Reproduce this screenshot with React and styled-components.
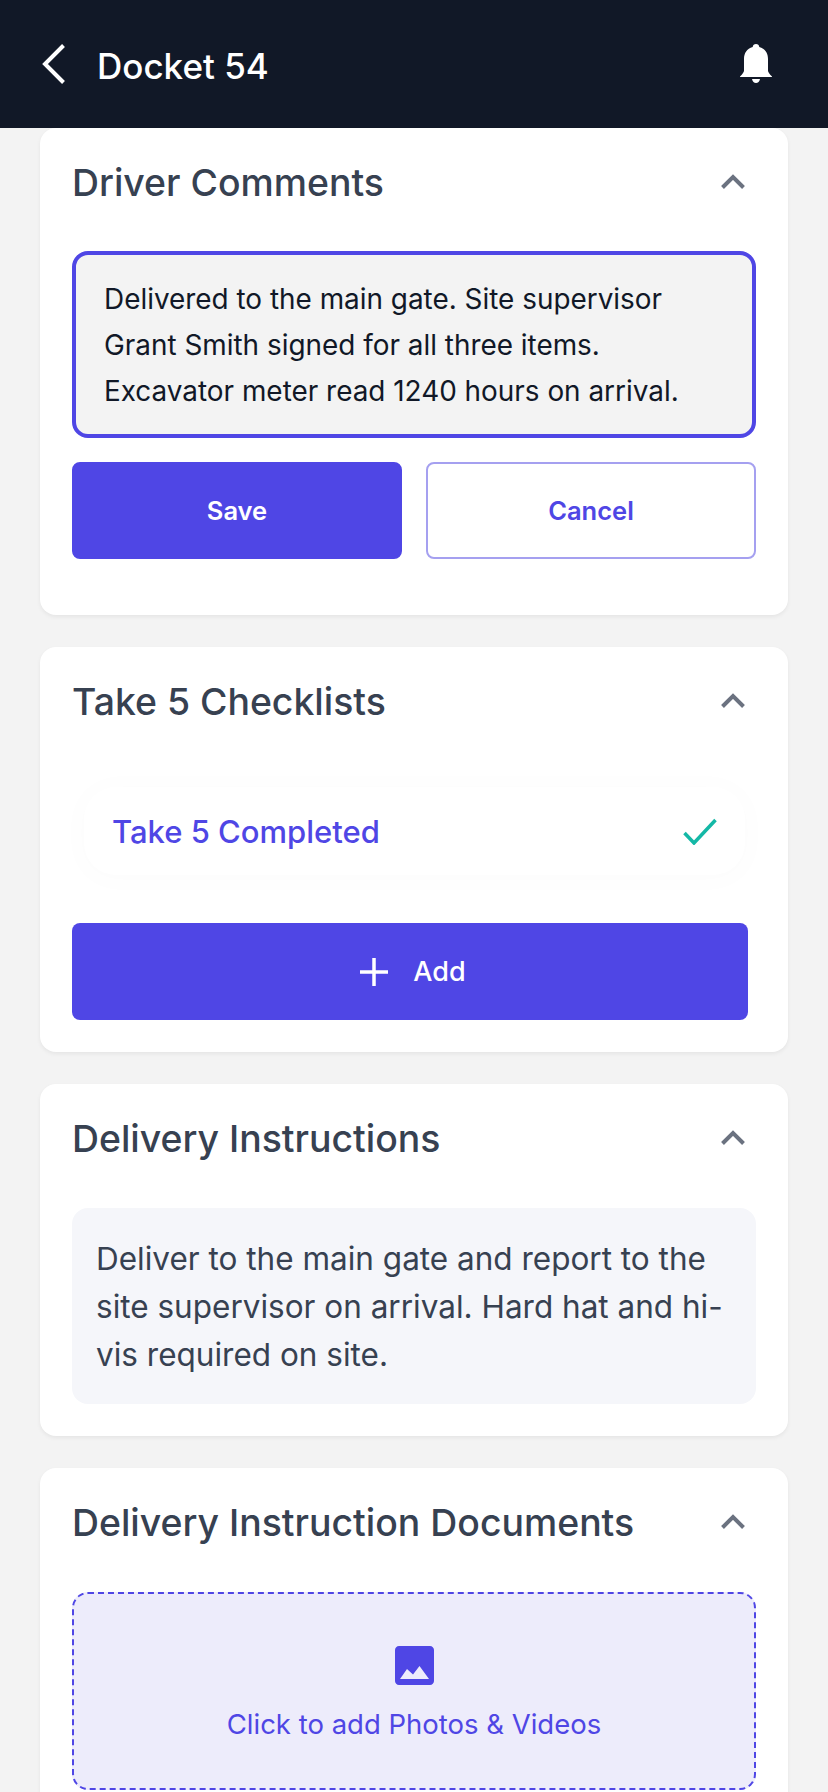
import React from 'react';
import styled, { createGlobalStyle } from 'styled-components';

const GlobalStyle = createGlobalStyle`
  html, body {
    margin: 0;
    padding: 0;
    background: #F3F3F3;
  }
  * {
    box-sizing: border-box;
  }
`;

const Page = styled.div`
  width: 828px;
  height: 1792px;
  overflow: hidden;
  background: #F3F3F3;
  font-family: Inter, 'Liberation Sans', sans-serif;
`;

const Header = styled.header`
  height: 128px;
  background: #111827;
  display: flex;
  align-items: center;
  justify-content: space-between;
  padding: 0 56px 0 42px;
`;

const HeaderLeft = styled.div`
  display: flex;
  align-items: center;
  gap: 32px;
`;

const Title = styled.h1`
  margin: 4px 0 0;
  color: #FFFFFF;
  font-size: 35px;
  font-weight: 500;
  line-height: 44px;
`;

const Content = styled.main`
  display: flex;
  flex-direction: column;
  gap: 32px;
  padding: 0 40px;
`;

const Card = styled.section`
  background: #FFFFFF;
  border-radius: 16px;
  box-shadow: 0 2px 4px rgba(0, 0, 0, 0.06);
  padding: 0 32px 32px;
`;

const CardHead = styled.div`
  height: 123px;
  display: flex;
  align-items: flex-start;
  justify-content: space-between;
  padding: 27px 11px 0 0;
`;

const CardTitle = styled.h2`
  margin: 0;
  color: #374151;
  font-size: 37.4px;
  font-weight: 450;
  line-height: 56px;
`;

const Chevron = styled.svg`
  margin-top: 19px;
  width: 24px;
  height: 15px;
`;

const Comment = styled.div`
  height: 187px;
  border: 4px solid #4F46E5;
  border-radius: 16px;
  background: #F3F3F3;
  padding: 21px 28px;
  color: #111827;
  font-size: 27.9px;
  line-height: 46px;
`;

const Actions = styled.div`
  display: flex;
  gap: 24px;
  margin: 24px 0;
`;

const ActionButton = styled.button`
  flex: 1;
  height: 97px;
  border-radius: 8px;
  border: 2px solid ${(p) => (p.$outline ? '#A5A0F0' : '#4F46E5')};
  background: ${(p) => (p.$outline ? '#FFFFFF' : '#4F46E5')};
  color: ${(p) => (p.$outline ? '#4F46E5' : '#FFFFFF')};
  font-family: inherit;
  font-size: 25.5px;
  font-weight: 600;
`;

const ChecklistRow = styled.div`
  height: 88px;
  margin: 17px 11px 48px 12px;
  padding: 0 28px;
  display: flex;
  align-items: center;
  justify-content: space-between;
  border-radius: 32px;
  background: #FFFFFF;
  box-shadow: 0 2px 24px 8px rgba(0, 0, 0, 0.012);
  color: #4F46E5;
  font-size: 31px;
  font-weight: 450;
`;

const AddButton = styled.button`
  width: 676px;
  height: 97px;
  display: flex;
  align-items: center;
  justify-content: center;
  gap: 25px;
  padding: 0 0 0 6px;
  border: none;
  border-radius: 8px;
  background: #4F46E5;
  color: #FFFFFF;
  font-family: inherit;
  font-size: 27px;
  font-weight: 500;
`;

const Instructions = styled.p`
  margin: 1px 0 0;
  height: 196px;
  padding: 27px 24px;
  border-radius: 16px;
  background: #F5F6FA;
  color: #374151;
  font-size: 31.5px;
  line-height: 48px;
  font-weight: 400;
`;

const DropZone = styled.div`
  margin-top: 1px;
  height: 198px;
  display: flex;
  flex-direction: column;
  align-items: center;
  padding-top: 52px;
  gap: 19px;
  border: 2px dashed #4F46E5;
  border-radius: 16px;
  background: #EDECFB;
  color: #4F46E5;
  font-size: 27.5px;
  line-height: 40px;
`;

const ChevronUp = () => (
  <Chevron viewBox="0 0 24 15" fill="none" stroke="#6B7280" strokeWidth="4">
    <path d="M1.5 13.5 12 3l10.5 10.5" />
  </Chevron>
);

const Section = ({ title, children }) => (
  <Card>
    <CardHead>
      <CardTitle>{title}</CardTitle>
      <ChevronUp />
    </CardHead>
    {children}
  </Card>
);

export default function App() {
  return (
    <Page>
      <GlobalStyle />
      <Header>
        <HeaderLeft>
          <svg width="23" height="40" viewBox="0 0 23 40" fill="none" stroke="#FFFFFF" strokeWidth="4">
            <path d="M21.5 1.5 3 20l18.5 18.5" />
          </svg>
          <Title>Docket 54</Title>
        </HeaderLeft>
        <svg width="32" height="40" viewBox="0 0 32 40" fill="#FFFFFF">
          <path d="M16 0c1.800 0 3.200 1.300 3.300 3.100C25.200 4.500 28 9.500 28 15v11.500c0 1.500 1.300 3.300 4 6V33H0v-.5c2.700-2.700 4-4.500 4-6V15C4 9.500 6.800 4.500 12.700 3.100 12.800 1.300 14.200 0 16 0z" />
          <path d="M12 35h8c-.5 2.500-2 4-4 4s-3.500-1.500-4-4z" />
        </svg>
      </Header>
      <Content>
        <Section title="Driver Comments">
          <Comment>
            Delivered to the main gate. Site supervisor
            <br />
            Grant Smith signed for all three items.
            <br />
            Excavator meter read 1240 hours on arrival.
          </Comment>
          <Actions>
            <ActionButton>Save</ActionButton>
            <ActionButton $outline>Cancel</ActionButton>
          </Actions>
        </Section>
        <Section title="Take 5 Checklists">
          <ChecklistRow>
            Take 5 Completed
            <svg width="34" height="27" viewBox="0 0 34 27" fill="none" stroke="#14B8A6" strokeWidth="3.500">
              <path d="M1.500 15 11 25 32.500 2" />
            </svg>
          </ChecklistRow>
          <AddButton>
            <svg width="28" height="28" viewBox="0 0 28 28" fill="none" stroke="#FFFFFF" strokeWidth="3.500">
              <path d="M14 0v28M0 14h28" />
            </svg>
            Add
          </AddButton>
        </Section>
        <Section title="Delivery Instructions">
          <Instructions>
            Deliver to the main gate and report to the site supervisor on arrival. Hard hat and hi-vis required on site.
          </Instructions>
        </Section>
        <Section title="Delivery Instruction Documents">
          <DropZone>
            <svg width="39" height="39" viewBox="0 0 39 39" fill="#4F46E5">
              <path
                fillRule="evenodd"
                d="M4 0h31c2.200 0 4 1.800 4 4v31c0 2.200-1.800 4-4 4H4c-2.200 0-4-1.800-4-4V4c0-2.200 1.800-4 4-4zM5 33h29L24.500 20 18 28.500 12 23z"
              />
            </svg>
            Click to add Photos &amp; Videos
          </DropZone>
        </Section>
      </Content>
    </Page>
  );
}
